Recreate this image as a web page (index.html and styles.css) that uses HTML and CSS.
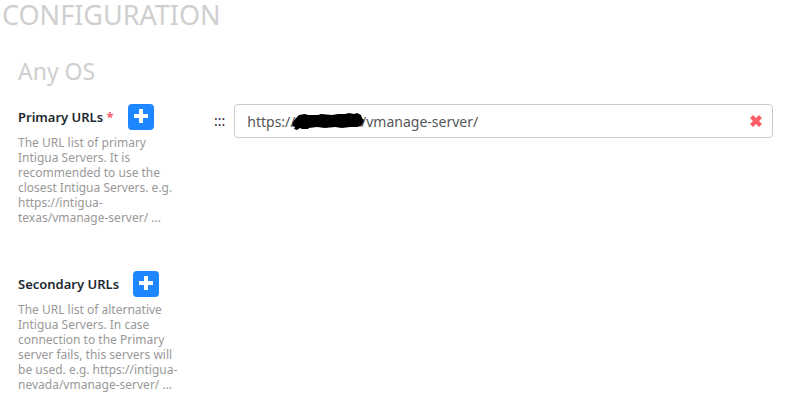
FILE: index.html
```html
<!DOCTYPE html>
<html lang="en">
<head>
<meta charset="utf-8">
<title>Configuration</title>
<link rel="stylesheet" href="styles.css">
</head>
<body>
<main>
  <h1>CONFIGURATION</h1>
  <section class="group">
    <h2>Any OS</h2>
    <div class="setting">
      <div class="info">
        <div class="heading">
          <label for="primary">Primary URLs <span class="required">*</span></label>
          <button class="add" type="button" aria-label="Add primary URL"><svg viewBox="0 0 14 14"><path d="M5 0h4v5h5v4H9v5H5V9H0V5h5z"/></svg></button>
        </div>
        <p>The URL list of primary Intigua Servers. It is recommended to use the closest Intigua Servers. e.g. https://intigua-<wbr>texas/vmanage-server/ ...</p>
      </div>
      <div class="entry">
        <span class="handle">:::</span>
        <div class="field">
          <input id="primary" type="text" value="https://&#160;&#160;&#160;&#160;&#160;&#160;&#160;&#160;&#160;&#160;&#160;&#160;&#160;&#160;&#160;&#160;&#160;&#160;/vmanage-server/">
          <svg class="redaction" viewBox="0 0 72 18" aria-hidden="true"><path d="M1 9L4 5 7 2 13 1 16 2 26 2 29 1 40 2 46 1 53 1 57 0 62 1 65 0 69 2 70 5 72 7 71 10 69 13 65 14 58 14 50 15 43 14 33 15 25 14 17 15 16 16 10 16 8 15 5 17 2 16 3 14 0 13z"/></svg>
          <button class="remove" type="button" aria-label="Remove URL"><svg viewBox="0 0 12 12"><path d="M3 0L6 3 9 0 12 3 9 6 12 9 9 12 6 9 3 12 0 9 3 6 0 3z"/></svg></button>
        </div>
      </div>
    </div>
    <div class="setting">
      <div class="info">
        <div class="heading">
          <span class="name">Secondary URLs</span>
          <button class="add" type="button" aria-label="Add secondary URL"><svg viewBox="0 0 14 14"><path d="M5 0h4v5h5v4H9v5H5V9H0V5h5z"/></svg></button>
        </div>
        <p>The URL list of alternative Intigua Servers. In case connection to the Primary server fails, this servers will be used. e.g. https://intigua-<wbr>nevada/vmanage-server/ ...</p>
      </div>
    </div>
  </section>
</main>
</body>
</html>
```
FILE: styles.css
```css
* { box-sizing: border-box; }
body {
  margin: 0;
  background: #fff;
  color: #212830;
  font-family: "Noto Sans", sans-serif;
}
h1, h2, p { margin: 0; }
h1, h2 { color: #cfcfcf; font-weight: 400; }
h1 { padding-left: 2px; font-size: 27px; line-height: 30px; }
h2 { margin-bottom: 18px; font-size: 23px; line-height: 30px; }
.group { padding: 26px 23px 0 18px; }
.setting { display: flex; }
.setting + .setting { margin-top: 46px; }
.info { flex: 0 0 162px; }
.heading { display: flex; gap: 14px; height: 26px; font-size: 13px; font-weight: 600; line-height: 26px; white-space: nowrap; }
.required { color: #ff5c68; font-weight: 700; }
.add {
  display: flex;
  align-items: center;
  justify-content: center;
  width: 26px;
  height: 26px;
  padding: 0 0 3px;
  border: 0;
  border-radius: 4px;
  background: #1e87ff;
}
.add svg { width: 14px; height: 14px; fill: #fff; }
.info p { margin-top: 5px; color: #999; font-size: 12px; line-height: 15px; }
.entry { display: flex; flex: 1; align-items: flex-start; gap: 9px; padding-left: 34px; }
.handle { font-size: 14px; line-height: 34px; }
.field { position: relative; flex: 1; }
.field input {
  display: block;
  width: 100%;
  height: 34px;
  padding: 0 36px 0 12px;
  border: 1px solid #ccc;
  border-radius: 4px;
  background: #fff;
  color: #555;
  font: 14px "Noto Sans", sans-serif;
}
.redaction { position: absolute; top: 9px; left: 58px; width: 72px; height: 18px; }
.remove { position: absolute; top: 11px; right: 11px; width: 12px; height: 12px; padding: 0; border: 0; background: none; }
.remove svg { display: block; width: 12px; height: 12px; fill: #ff5c68; }
```
